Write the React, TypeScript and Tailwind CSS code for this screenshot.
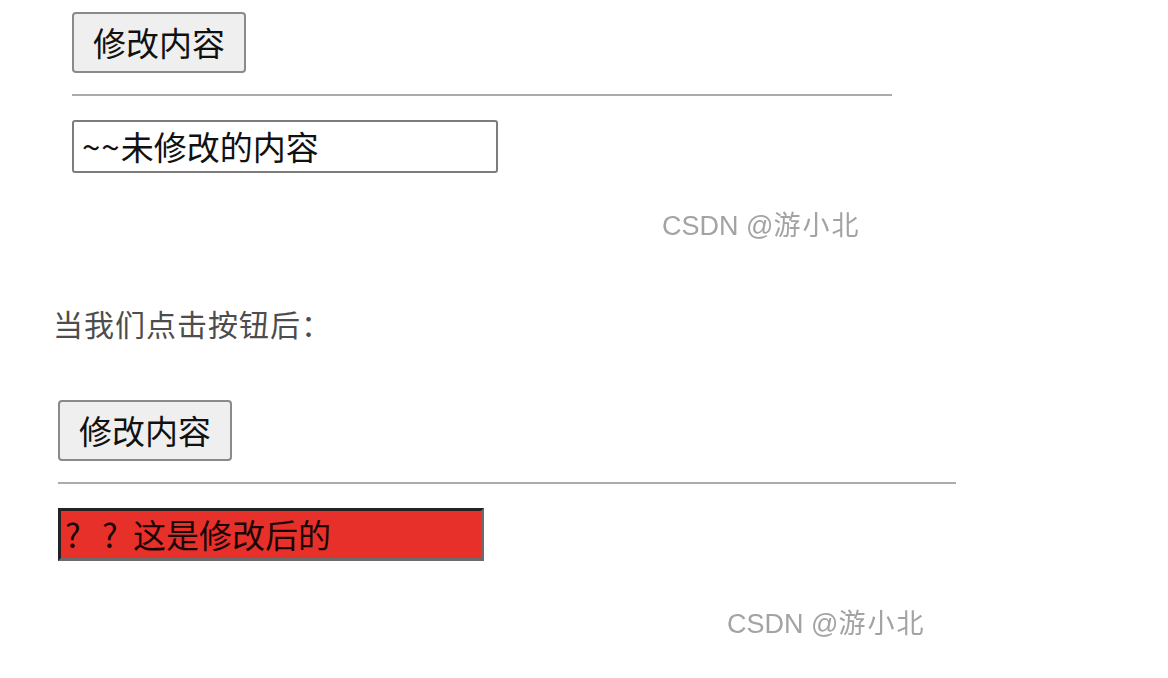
import React from "react";

const cjk = { fontFamily: '"Noto Sans CJK SC", "Noto Sans", sans-serif' };

function Watermark({ left }: { left: string }) {
  return (
    <div
      className={`${left} h-[30px] flex items-center text-[27px] leading-none text-[#a3a3a3] blur-[0.4px]`}
      style={{ fontFamily: '"Liberation Sans", "Noto Sans CJK SC", sans-serif' }}
    >
      <span>CSDN @</span>
      <span className="tracking-[2px]">游小北</span>
    </div>
  );
}

export default function App() {
  return (
    <div className="w-[1168px] h-[678px] bg-white overflow-hidden" style={cjk}>
      <div className="pt-[12px] pl-[72px] flex flex-col items-start">
        <div className="w-[174px] h-[61px] bg-[#efefef] border-2 border-[#8a8a8a] rounded-[4px] flex items-center justify-center text-[33px] leading-none text-[#111]">
          修改内容
        </div>
        <div className="mt-[21px] w-[820px] h-[2px] bg-[#ababab]" />
        <div className="mt-[24px] w-[426px] h-[53px] bg-white border-2 border-[#7d7d7d] rounded-[3px] flex items-center pl-[8px] text-[33px] leading-none text-[#111]">
          <span className="tracking-[1px]">~~</span>未修改的内容
        </div>
      </div>
      <div className="mt-[38px]">
        <Watermark left="ml-[662px]" />
      </div>
      <div className="mt-[67px] ml-[53px] h-[30px] flex items-center text-[30px] leading-none tracking-[1px] text-[#4d4d4d]">
        当我们点击按钮后：
      </div>
      <div className="mt-[62px] pl-[58px] flex flex-col items-start">
        <div className="w-[174px] h-[61px] bg-[#efefef] border-2 border-[#8a8a8a] rounded-[4px] flex items-center justify-center text-[33px] leading-none text-[#111]">
          修改内容
        </div>
        <div className="mt-[21px] w-[898px] h-[2px] bg-[#ababab]" />
        <div className="mt-[24px] w-[426px] h-[53px] bg-[#e8302a] border-[3px] border-t-[#222] border-l-[#222] border-r-[#6b6b6b] border-b-[#6b6b6b] flex items-center pl-[4px] text-[33px] leading-none text-[#1a0505]">
          <span className="inline-block w-[37px]">?</span>
          <span className="inline-block w-[31px]">?</span>
          <span>这是修改后的</span>
        </div>
      </div>
      <div className="mt-[48px]">
        <Watermark left="ml-[727px]" />
      </div>
    </div>
  );
}
